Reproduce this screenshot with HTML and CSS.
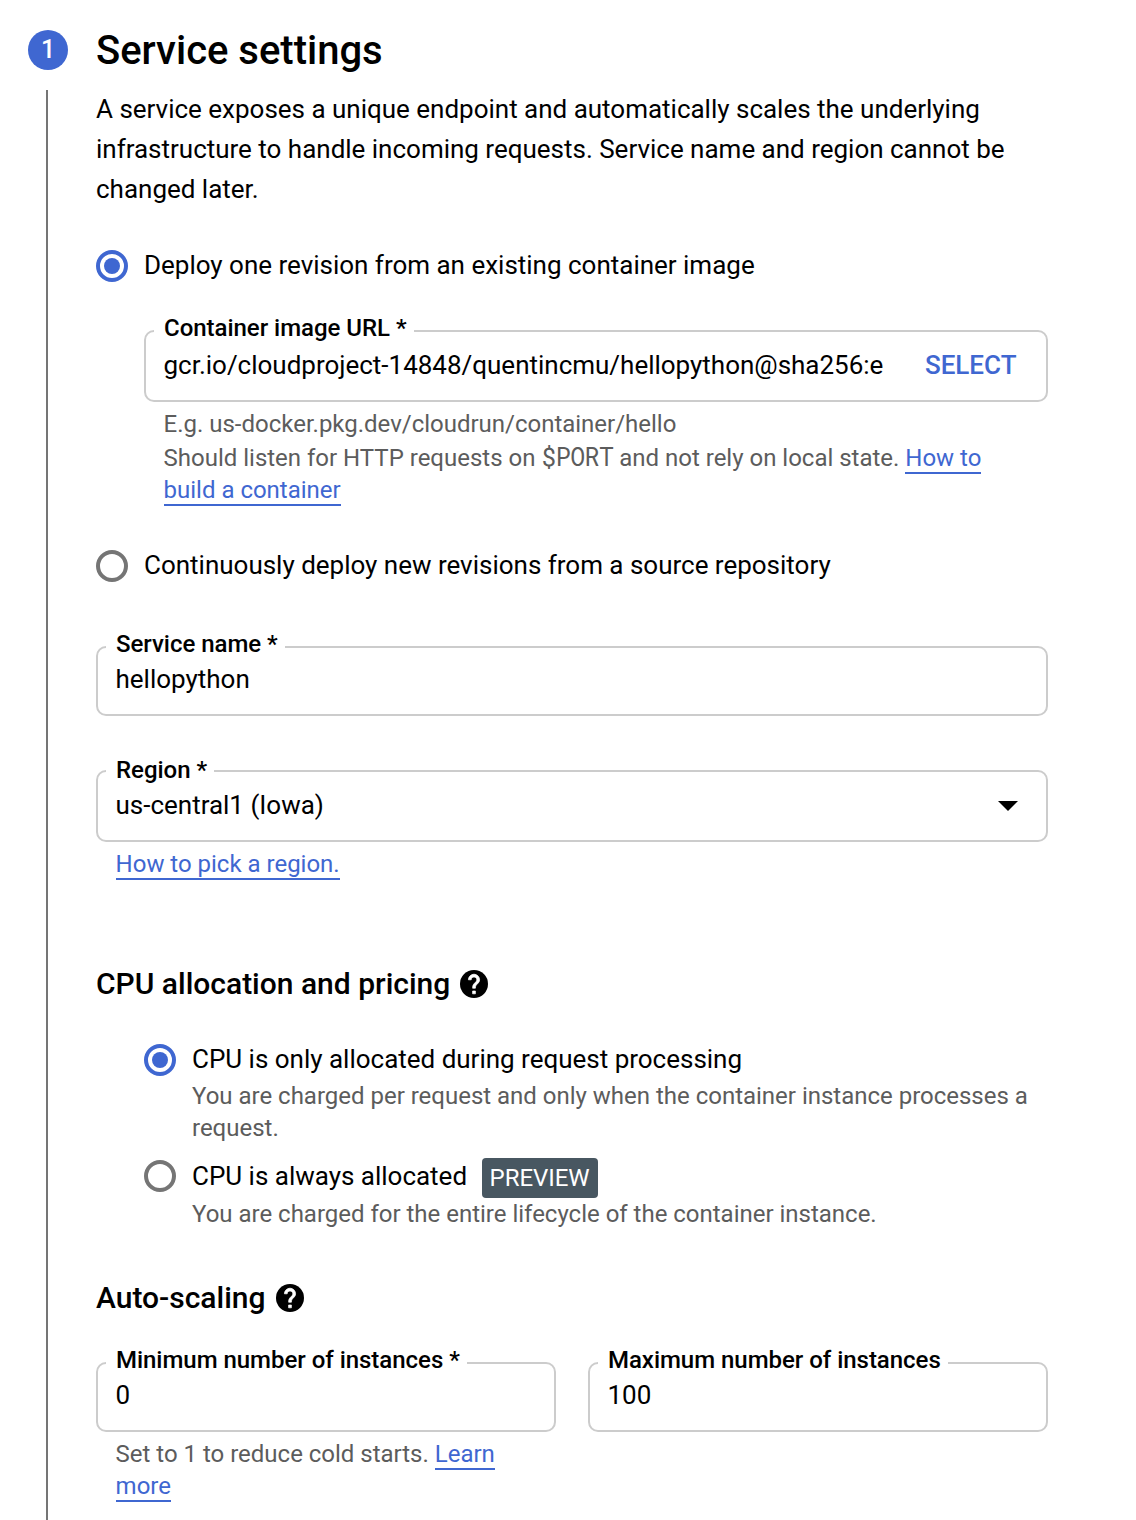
FILE: index.html
```html
<!DOCTYPE html>
<html lang="en">
<head>
<meta charset="utf-8">
<title>Service settings</title>
<link rel="stylesheet" href="styles.css">
</head>
<body>
<main class="step">
  <div class="rail">
    <div class="step-number">1</div>
    <div class="step-line"></div>
  </div>
  <div class="content">
    <h1 class="title">Service settings</h1>
    <p class="intro">A service exposes a unique endpoint and automatically scales the underlying infrastructure to handle incoming requests. Service name and region cannot be changed later.</p>

    <div class="option option-image">
      <span class="radio checked"></span>
      <span class="option-text">Deploy one revision from an existing container image</span>
    </div>
    <div class="nested">
      <div class="field field-tall">
        <label class="label">Container image URL *</label>
        <div class="value value-url">gcr.io/cloudproject-14848/quentincmu/hellopython@sha256:e</div>
        <button class="select">SELECT</button>
      </div>
      <div class="hint">
        <div class="hint-first">E.g. us-docker.pkg.dev/cloudrun/container/hello</div>
        <div>Should listen for HTTP requests on <code class="code">$PORT</code> and not rely on local state. <a class="link">How to build a container</a></div>
      </div>
    </div>
    <div class="option option-source">
      <span class="radio"></span>
      <span class="option-text">Continuously deploy new revisions from a source repository</span>
    </div>

    <div class="field field-service">
      <label class="label">Service name *</label>
      <div class="value">hellopython</div>
    </div>
    <div class="field field-tall field-region">
      <label class="label label-region">Region *</label>
      <div class="value">us-central1 (Iowa)</div>
      <svg class="caret" viewBox="0 0 20 10"><path d="M0 0h20L10 10z"/></svg>
    </div>
    <div class="hint"><a class="link">How to pick a region.</a></div>

    <h2 class="heading heading-cpu">CPU allocation and pricing
      <svg class="help" viewBox="2 2 20 20"><circle cx="12" cy="12" r="10"/><path class="help-mark" d="M13 19h-2v-2h2zM15.070 11.250l-.9.920C13.450 12.900 13 13.500 13 15h-2v-.5c0-1.100.450-2.100 1.170-2.830l1.240-1.260c.370-.360.590-.860.590-1.410 0-1.100-.9-2-2-2s-2 .9-2 2H8c0-2.210 1.790-4 4-4s4 1.790 4 4c0 .880-.360 1.680-.930 2.250z"/></svg>
    </h2>
    <div class="cpu">
      <div class="option">
        <span class="radio checked"></span>
        <span class="option-text">CPU is only allocated during request processing</span>
      </div>
      <p class="detail">You are charged per request and only when the container instance processes a request.</p>
      <div class="option option-always">
        <span class="radio"></span>
        <span class="option-text">CPU is always allocated</span>
        <span class="badge">PREVIEW</span>
      </div>
      <p class="detail">You are charged for the entire lifecycle of the container instance.</p>
    </div>

    <h2 class="heading heading-scaling">Auto-scaling
      <svg class="help" viewBox="2 2 20 20"><circle cx="12" cy="12" r="10"/><path class="help-mark" d="M13 19h-2v-2h2zM15.070 11.250l-.9.920C13.450 12.900 13 13.500 13 15h-2v-.5c0-1.100.450-2.100 1.170-2.830l1.240-1.260c.370-.360.590-.860.590-1.410 0-1.100-.9-2-2-2s-2 .9-2 2H8c0-2.210 1.790-4 4-4s4 1.790 4 4c0 .880-.360 1.680-.930 2.250z"/></svg>
    </h2>
    <div class="instances">
      <div>
        <div class="field">
          <label class="label">Minimum number of instances *</label>
          <div class="value">0</div>
        </div>
        <div class="hint">Set to 1 to reduce cold starts. <a class="link">Learn more</a></div>
      </div>
      <div>
        <div class="field">
          <label class="label">Maximum number of instances</label>
          <div class="value">100</div>
        </div>
      </div>
    </div>
  </div>
</main>
</body>
</html>
```
FILE: styles.css
```css
* { box-sizing: border-box; }

body {
  margin: 0;
  background: #fff;
  color: #000;
  font: 26px/32px Roboto, "Liberation Sans", sans-serif;
  letter-spacing: -0.01px;
}

.step {
  display: flex;
  height: 1520px;
  padding: 30px 88px 0 28px;
  overflow: hidden;
}

.rail {
  display: flex;
  flex-direction: column;
  width: 68px;
}

.step-number {
  width: 40px;
  height: 40px;
  border-radius: 50%;
  background: #3f67d1;
  color: #fff;
  font-size: 25px;
  font-weight: 500;
  line-height: 40px;
  text-align: center;
}

.step-line {
  flex: 1;
  width: 2px;
  margin: 20px 0 0 18px;
  background: #757575;
}

.content { width: 952px; }

.title {
  margin: 0;
  font-size: 40px;
  font-weight: 500;
  line-height: 42px;
}

.intro {
  margin: 17px 0 0;
  line-height: 40px;
}

.option {
  display: flex;
  align-items: center;
  gap: 16px;
  height: 32px;
}

.option-text { margin-top: -2px; white-space: nowrap; }
.option-image { margin-top: 41px; }
.option-source { margin-top: 44px; }

.radio {
  display: flex;
  align-items: center;
  justify-content: center;
  flex: none;
  width: 32px;
  height: 32px;
  border: 4px solid #757575;
  border-radius: 50%;
}

.radio.checked { border-color: #3f67d1; }

.radio.checked::after {
  content: "";
  width: 16px;
  height: 16px;
  border-radius: 50%;
  background: #3f67d1;
}

.nested { margin: 48px 0 0 48px; }

.field {
  position: relative;
  display: flex;
  height: 70px;
  padding: 15px 28px 0 17.5px;
  border: 2px solid #ccc;
  border-radius: 10px;
}

.field-tall { height: 72px; padding-top: 17px; }
.field-service { margin-top: 64px; }
.field-region { margin-top: 54px; }

.label {
  position: absolute;
  left: 8px;
  top: -20px;
  padding: 0 7.5px 0 10px;
  background: #fff;
  font-size: 24px;
  font-weight: 500;
  line-height: 32px;
  letter-spacing: -0.03px;
  white-space: nowrap;
}

.label-region { top: -18px; padding-right: 6.5px; }

.value { flex: 1; white-space: nowrap; }

.select {
  height: 32px;
  margin-right: 1.5px;
  padding: 0;
  border: 0;
  background: none;
  color: #3f67d1;
  font: 500 26px/32px Roboto, "Liberation Sans", sans-serif;
}

.caret { width: 20px; height: 10px; margin-top: 12px; }

.hint {
  margin: 6px 20px 0 19.6px;
  color: #5c5c5c;
  font-size: 24px;
  line-height: 32px;
}

.hint-first { margin-bottom: 2px; }

.code {
  font: 25px/24px "Roboto Mono", "Liberation Mono", monospace;
  letter-spacing: -0.6px;
}

.link {
  border-bottom: 2px solid #3f67d1;
  color: #3f67d1;
}

.heading {
  display: flex;
  align-items: center;
  gap: 10px;
  height: 32px;
  margin: 0;
  font-size: 30px;
  font-weight: 500;
  letter-spacing: 0;
}

.heading-cpu { margin-top: 88px; }
.heading-scaling { margin-top: 52px; }

.help { width: 28px; height: 28px; }

.help-mark {
  fill: #fff;
  stroke: #fff;
  stroke-width: 0.5;
}

.cpu { margin: 44px 0 0 48px; }

.option-always { margin-top: 16px; }
.option-always .option-text { margin-top: 0; }

.detail {
  margin: 4px 0 0 48px;
  color: #5c5c5c;
  font-size: 24px;
}

.option-always + .detail { margin-top: 6px; }

.badge {
  flex: none;
  height: 40px;
  padding: 0 8.5px 0 7.5px;
  margin: 4px 0 0 -1px;
  border-radius: 4px;
  background: #485761;
  color: #fff;
  font-size: 24px;
  line-height: 40px;
  letter-spacing: -0.05px;
}

.instances {
  display: grid;
  grid-template-columns: 1fr 1fr;
  gap: 32px;
  margin-top: 48px;
}
```
